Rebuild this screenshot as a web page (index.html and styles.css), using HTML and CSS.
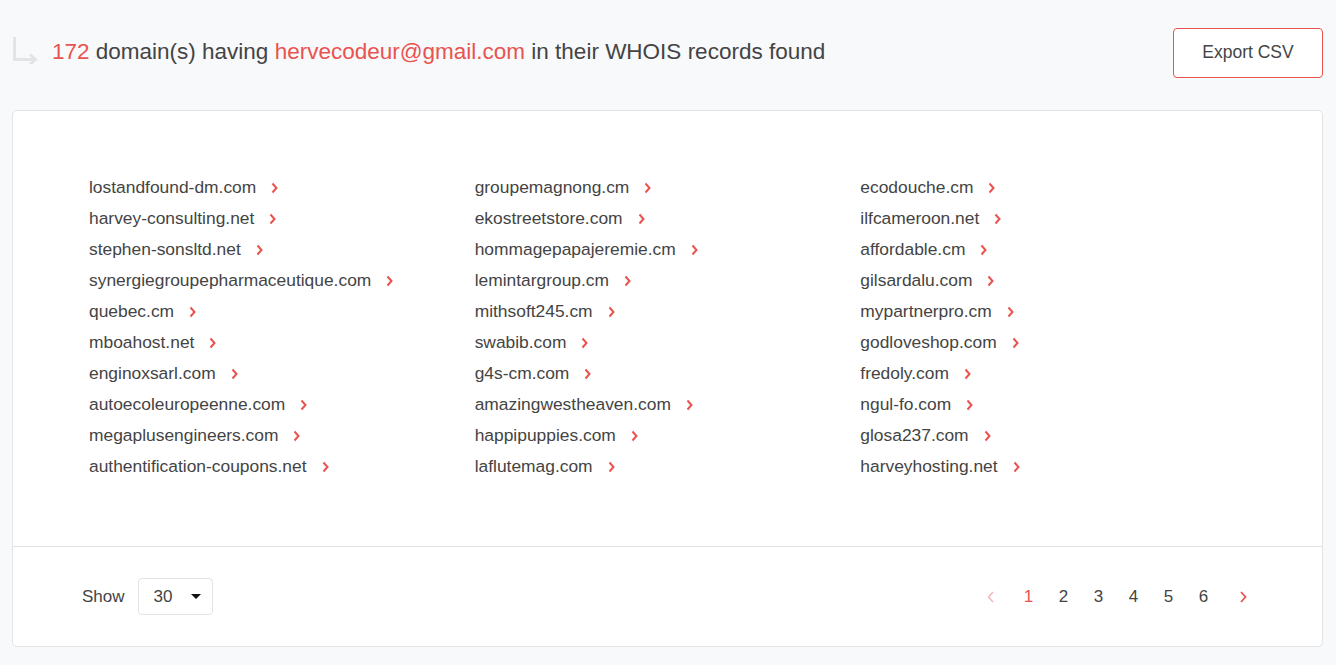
FILE: index.html
```html
<!DOCTYPE html>
<html lang="en">
<head>
    <meta charset="UTF-8">
    <meta name="viewport" content="width=device-width, initial-scale=1.0">
    <title>WHOIS Reverse Lookup</title>
    <link rel="stylesheet" href="styles.css">
</head>
<body>
    <div class="page">
        <div class="header">
            <div class="title">
                <svg class="title-icon" width="26" height="28" viewBox="0 0 26 28">
                    <path d="M2.5 1 V23.5 H22" fill="none" stroke="#e3e4e6" stroke-width="3"/>
                    <path d="M18 18.5 L23.5 23.5 L18 28.5" fill="none" stroke="#e3e4e6" stroke-width="3"/>
                </svg>
                <h1><span class="accent">172</span> domain(s) having <span class="accent">hervecodeur@gmail.com</span> in their WHOIS records found</h1>
            </div>
            <button class="export-btn">Export CSV</button>
        </div>

        <div class="card">
            <ul class="domains" id="domains"></ul>
            <div class="card-footer">
                <div class="show">
                    <span>Show</span>
                    <div class="select">30 <span class="caret"></span></div>
                </div>
                <div class="pager">
                    <a class="pager-item prev"><svg width="8" height="12" viewBox="0 0 8 12"><path d="M6 1 L1.5 6 L6 11" fill="none" stroke="currentColor" stroke-width="1.5"/></svg></a>
                    <a class="pager-item active">1</a>
                    <a class="pager-item">2</a>
                    <a class="pager-item">3</a>
                    <a class="pager-item">4</a>
                    <a class="pager-item">5</a>
                    <a class="pager-item">6</a>
                    <a class="pager-item next"><svg width="8" height="12" viewBox="0 0 8 12"><path d="M2 1 L6.5 6 L2 11" fill="none" stroke="currentColor" stroke-width="1.8"/></svg></a>
                </div>
            </div>
        </div>
    </div>

    <script>
        const domains = [
            'lostandfound-dm.com', 'groupemagnong.cm', 'ecodouche.cm',
            'harvey-consulting.net', 'ekostreetstore.com', 'ilfcameroon.net',
            'stephen-sonsltd.net', 'hommagepapajeremie.cm', 'affordable.cm',
            'synergiegroupepharmaceutique.com', 'lemintargroup.cm', 'gilsardalu.com',
            'quebec.cm', 'mithsoft245.cm', 'mypartnerpro.cm',
            'mboahost.net', 'swabib.com', 'godloveshop.com',
            'enginoxsarl.com', 'g4s-cm.com', 'fredoly.com',
            'autoecoleuropeenne.com', 'amazingwestheaven.com', 'ngul-fo.com',
            'megaplusengineers.com', 'happipuppies.com', 'glosa237.com',
            'authentification-coupons.net', 'laflutemag.com', 'harveyhosting.net'
        ];

        const list = document.getElementById('domains');
        domains.forEach(function (name) {
            const li = document.createElement('li');
            li.innerHTML = '<a>' + name + '</a>' +
                '<svg class="chev" width="7" height="12" viewBox="0 0 7 12"><path d="M1.5 1.5 L5.5 6 L1.5 10.5" fill="none" stroke="currentColor" stroke-width="2"/></svg>';
            list.appendChild(li);
        });
    </script>
</body>
</html>
```

FILE: styles.css
```css
body {
    margin: 0;
    font-family: "Liberation Sans", Arial, sans-serif;
    background-color: #f8f9fa;
    color: #444;
}
.page {
    padding: 0 13px 0 12px;
}
.header {
    display: flex;
    justify-content: space-between;
    align-items: center;
    height: 104px;
    margin-bottom: 6px;
}
.title {
    display: flex;
    align-items: center;
}
.title-icon {
    margin: -4px 14px 0 0;
}
h1 {
    margin: 0;
    font-size: 22.5px;
    font-weight: normal;
    color: #444;
}
.accent {
    color: #e9534f;
}
.export-btn {
    width: 150px;
    height: 50px;
    margin-top: 1px;
    background-color: #fff;
    border: 1px solid #e9534f;
    border-radius: 4px;
    color: #444;
    font-family: inherit;
    font-size: 17.5px;
    cursor: pointer;
}
.card {
    background-color: #fff;
    border: 1px solid #e2e3e5;
    border-radius: 5px;
}
.domains {
    list-style: none;
    margin: 0;
    padding: 61px 76px 64px;
    display: grid;
    grid-template-columns: repeat(3, 1fr);
    grid-auto-rows: 31px;
}
.domains li {
    display: flex;
    align-items: center;
    font-size: 17.4px;
}
.domains a {
    color: #444;
}
.chev {
    color: #e9534f;
    margin-left: 15px;
    margin-top: 1px;
}
.card-footer {
    display: flex;
    justify-content: space-between;
    align-items: center;
    height: 99px;
    border-top: 1px solid #e2e3e5;
    padding: 0 62px 0 69px;
}
.show {
    display: flex;
    align-items: center;
    font-size: 17px;
}
.select {
    display: flex;
    align-items: center;
    justify-content: space-between;
    box-sizing: border-box;
    width: 75px;
    height: 37px;
    margin-left: 13px;
    padding: 0 11px 0 15px;
    border: 1px solid #e2e3e5;
    border-radius: 4px;
    font-size: 17px;
}
.caret {
    width: 0;
    height: 0;
    border-left: 5px solid transparent;
    border-right: 5px solid transparent;
    border-top: 5px solid #111;
}
.pager {
    display: flex;
    align-items: center;
}
.pager-item {
    width: 35px;
    text-align: center;
    font-size: 17px;
    color: #444;
}
.pager-item.active {
    color: #e9534f;
}
.pager-item.prev {
    color: #f5b7b5;
    margin-right: 3px;
}
.pager-item.next {
    color: #e9534f;
    margin-left: 4px;
}
.pager-item svg {
    display: block;
    margin: 0 auto;
}
```
